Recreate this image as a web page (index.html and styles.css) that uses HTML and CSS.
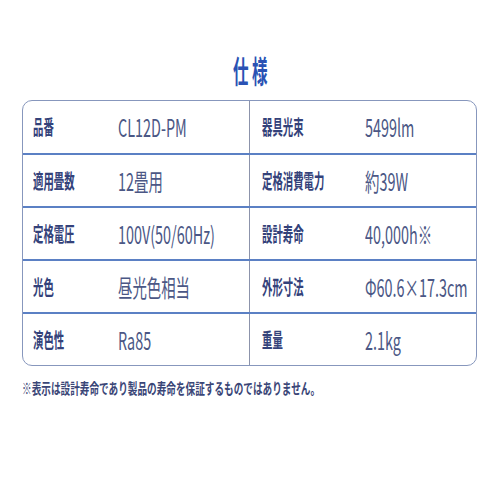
FILE: index.html
```html
<!DOCTYPE html>
<html lang="ja">
<head>
<meta charset="utf-8">
<link rel="stylesheet" href="styles.css">
</head>
<body>
<div class="page">
  <h1 class="title"><span class="tc">仕</span><span class="tc">様</span></h1>
  <div class="spec">
    <div class="row">
      <div class="cell lab"><span class="sq">品番</span></div>
      <div class="cell val"><span class="sq">CL12D-PM</span></div>
      <div class="cell lab div"><span class="sq">器具光束</span></div>
      <div class="cell val"><span class="sq">5499lm</span></div>
    </div>
    <div class="row">
      <div class="cell lab"><span class="sq">適用畳数</span></div>
      <div class="cell val"><span class="sq">12畳用</span></div>
      <div class="cell lab div"><span class="sq">定格消費電力</span></div>
      <div class="cell val"><span class="sq">約39W</span></div>
    </div>
    <div class="row">
      <div class="cell lab"><span class="sq">定格電圧</span></div>
      <div class="cell val"><span class="sq">100V(50/60Hz)</span></div>
      <div class="cell lab div"><span class="sq">設計寿命</span></div>
      <div class="cell val"><span class="sq">40,000h※</span></div>
    </div>
    <div class="row">
      <div class="cell lab"><span class="sq">光色</span></div>
      <div class="cell val"><span class="sq">昼光色相当</span></div>
      <div class="cell lab div"><span class="sq">外形寸法</span></div>
      <div class="cell val"><span class="sq">Φ60.6×17.3cm</span></div>
    </div>
    <div class="row">
      <div class="cell lab"><span class="sq">演色性</span></div>
      <div class="cell val"><span class="sq">Ra85</span></div>
      <div class="cell lab div"><span class="sq">重量</span></div>
      <div class="cell val"><span class="sq">2.1kg</span></div>
    </div>
  </div>
  <p class="note"><span class="sq">※表示は設計寿命であり製品の寿命を保証するものではありません。</span></p>
</div>
</body>
</html>
```
FILE: styles.css
```css
html, body {
  margin: 0;
  padding: 0;
  background: #ffffff;
  overflow: hidden;
}
body {
  font-family: "Noto Sans CJK JP", "Noto Sans", sans-serif;
  color: #34427a;
}
.page {
  width: 500px;
  height: 500px;
  padding-top: 52px;
  box-sizing: border-box;
  overflow: hidden;
}
.sq {
  display: inline-block;
  white-space: nowrap;
  transform-origin: left center;
}
.title {
  margin: 0 0 12px 0;
  height: 36px;
  display: flex;
  justify-content: center;
  align-items: center;
  gap: 4px;
  font-size: 31px;
  font-weight: 700;
  color: #2a52b4;
}
.tc {
  display: inline-block;
  width: 15px;
  line-height: 36px;
  white-space: nowrap;
  transform: scaleX(0.5);
  transform-origin: left center;
}
.spec {
  margin-left: 22px;
  width: 455px;
  box-sizing: border-box;
  border: 1.5px solid #8797bd;
  border-radius: 10px;
}
.row {
  display: grid;
  grid-template-columns: 95px 131px 116px 1fr;
  height: 51px;
  border-top: 2px solid #5b80c4;
}
.row:first-child {
  border-top: none;
  height: 52px;
}
.cell {
  display: flex;
  align-items: center;
  line-height: 24px;
  overflow: hidden;
  min-width: 0;
}
.lab {
  padding-left: 10px;
  font-size: 20px;
  font-weight: 700;
  color: #34427a;
}
.lab .sq {
  transform: scaleX(0.52);
}
.div {
  border-left: 1px solid #8c93ab;
  padding-left: 12px;
}
.val {
  font-size: 24px;
  font-weight: 400;
  color: #4b5785;
}
.val .sq {
  transform: scaleX(0.6);
}
.note {
  margin: 12px 0 0 22px;
  height: 20px;
  line-height: 20px;
  font-size: 14.5px;
  font-weight: 700;
  color: #3a4677;
}
.note .sq {
  transform: scaleX(0.664);
}
```
